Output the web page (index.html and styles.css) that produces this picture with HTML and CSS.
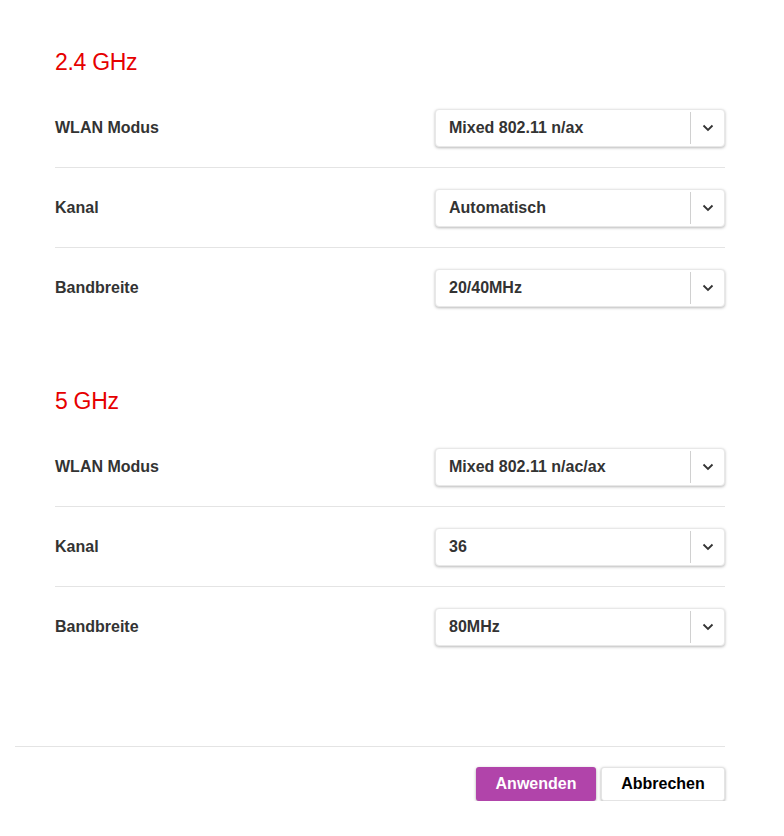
FILE: index.html
```html
<!DOCTYPE html>
<html lang="de">
<head>
    <meta charset="UTF-8">
    <meta name="viewport" content="width=device-width, initial-scale=1.0">
    <title>WLAN Einstellungen</title>
    <link rel="stylesheet" href="styles.css">
</head>
<body>
<div class="page">
    <div class="section">
        <h2 class="band-title">2.4 GHz</h2>
        <div class="row">
            <span class="label">WLAN Modus</span>
            <div class="dropdown">
                <span class="dropdown-value">Mixed 802.11 n/ax</span>
                <span class="dropdown-arrow">
                    <svg width="12" height="8" viewBox="0 0 12 8"><path d="M1.5 1.5 L6 6 L10.5 1.5" fill="none" stroke="#333" stroke-width="1.8"/></svg>
                </span>
            </div>
        </div>
        <div class="row">
            <span class="label">Kanal</span>
            <div class="dropdown">
                <span class="dropdown-value">Automatisch</span>
                <span class="dropdown-arrow">
                    <svg width="12" height="8" viewBox="0 0 12 8"><path d="M1.5 1.5 L6 6 L10.5 1.5" fill="none" stroke="#333" stroke-width="1.8"/></svg>
                </span>
            </div>
        </div>
        <div class="row">
            <span class="label">Bandbreite</span>
            <div class="dropdown">
                <span class="dropdown-value">20/40MHz</span>
                <span class="dropdown-arrow">
                    <svg width="12" height="8" viewBox="0 0 12 8"><path d="M1.5 1.5 L6 6 L10.5 1.5" fill="none" stroke="#333" stroke-width="1.8"/></svg>
                </span>
            </div>
        </div>
    </div>

    <div class="section">
        <h2 class="band-title">5 GHz</h2>
        <div class="row">
            <span class="label">WLAN Modus</span>
            <div class="dropdown">
                <span class="dropdown-value">Mixed 802.11 n/ac/ax</span>
                <span class="dropdown-arrow">
                    <svg width="12" height="8" viewBox="0 0 12 8"><path d="M1.5 1.5 L6 6 L10.5 1.5" fill="none" stroke="#333" stroke-width="1.8"/></svg>
                </span>
            </div>
        </div>
        <div class="row">
            <span class="label">Kanal</span>
            <div class="dropdown">
                <span class="dropdown-value">36</span>
                <span class="dropdown-arrow">
                    <svg width="12" height="8" viewBox="0 0 12 8"><path d="M1.5 1.5 L6 6 L10.5 1.5" fill="none" stroke="#333" stroke-width="1.8"/></svg>
                </span>
            </div>
        </div>
        <div class="row">
            <span class="label">Bandbreite</span>
            <div class="dropdown">
                <span class="dropdown-value">80MHz</span>
                <span class="dropdown-arrow">
                    <svg width="12" height="8" viewBox="0 0 12 8"><path d="M1.5 1.5 L6 6 L10.5 1.5" fill="none" stroke="#333" stroke-width="1.8"/></svg>
                </span>
            </div>
        </div>
    </div>

    <div class="actions">
        <button class="btn btn-primary">Anwenden</button>
        <button class="btn btn-secondary">Abbrechen</button>
    </div>
</div>
</body>
</html>
```

FILE: styles.css
```css
body {
    margin: 0;
    background-color: #fff;
    font-family: "Liberation Sans", Arial, sans-serif;
    color: #333;
}
.page {
    padding: 0 59px 0 15px;
}
.section {
    padding-left: 40px;
}
.section:first-child {
    padding-top: 48px;
}
.section + .section {
    margin-top: 60px;
}
.band-title {
    margin: 0 0 12px 0;
    font-size: 23px;
    line-height: 28px;
    font-weight: normal;
    color: #e60000;
    letter-spacing: -0.3px;
}
.row {
    display: flex;
    align-items: center;
    justify-content: space-between;
    padding: 21px 0 20px 0;
    border-bottom: 1px solid #e4e4e4;
}
.row:last-child {
    border-bottom: none;
}
.label {
    font-size: 16px;
    font-weight: bold;
    color: #333;
}
.dropdown {
    display: flex;
    align-items: center;
    width: 290px;
    height: 38px;
    box-sizing: border-box;
    background-color: #fff;
    border: 1px solid #e8e8e8;
    border-radius: 4px;
    box-shadow: 0 1px 3px rgba(0, 0, 0, 0.28);
}
.dropdown-value {
    flex: 1;
    padding-left: 13px;
    font-size: 16px;
    font-weight: bold;
    color: #333;
}
.dropdown-arrow {
    display: flex;
    align-items: center;
    justify-content: center;
    width: 33px;
    height: 32px;
    border-left: 1px solid #d0d0d0;
}
.actions {
    display: flex;
    justify-content: flex-end;
    gap: 5px;
    margin-top: 80px;
    padding-top: 20px;
    border-top: 1px solid #e4e4e4;
}
.btn {
    height: 34px;
    padding: 0;
    border-radius: 3px;
    font-family: "Liberation Sans", Arial, sans-serif;
    font-size: 16px;
    font-weight: bold;
    cursor: pointer;
    box-shadow: 0 1px 3px rgba(0, 0, 0, 0.35);
}
.btn-primary {
    width: 120px;
    background-color: #b144aa;
    color: #fff;
    border: none;
}
.btn-secondary {
    width: 124px;
    background-color: #fff;
    color: #000;
    border: 1px solid #e4e4e4;
}
```
